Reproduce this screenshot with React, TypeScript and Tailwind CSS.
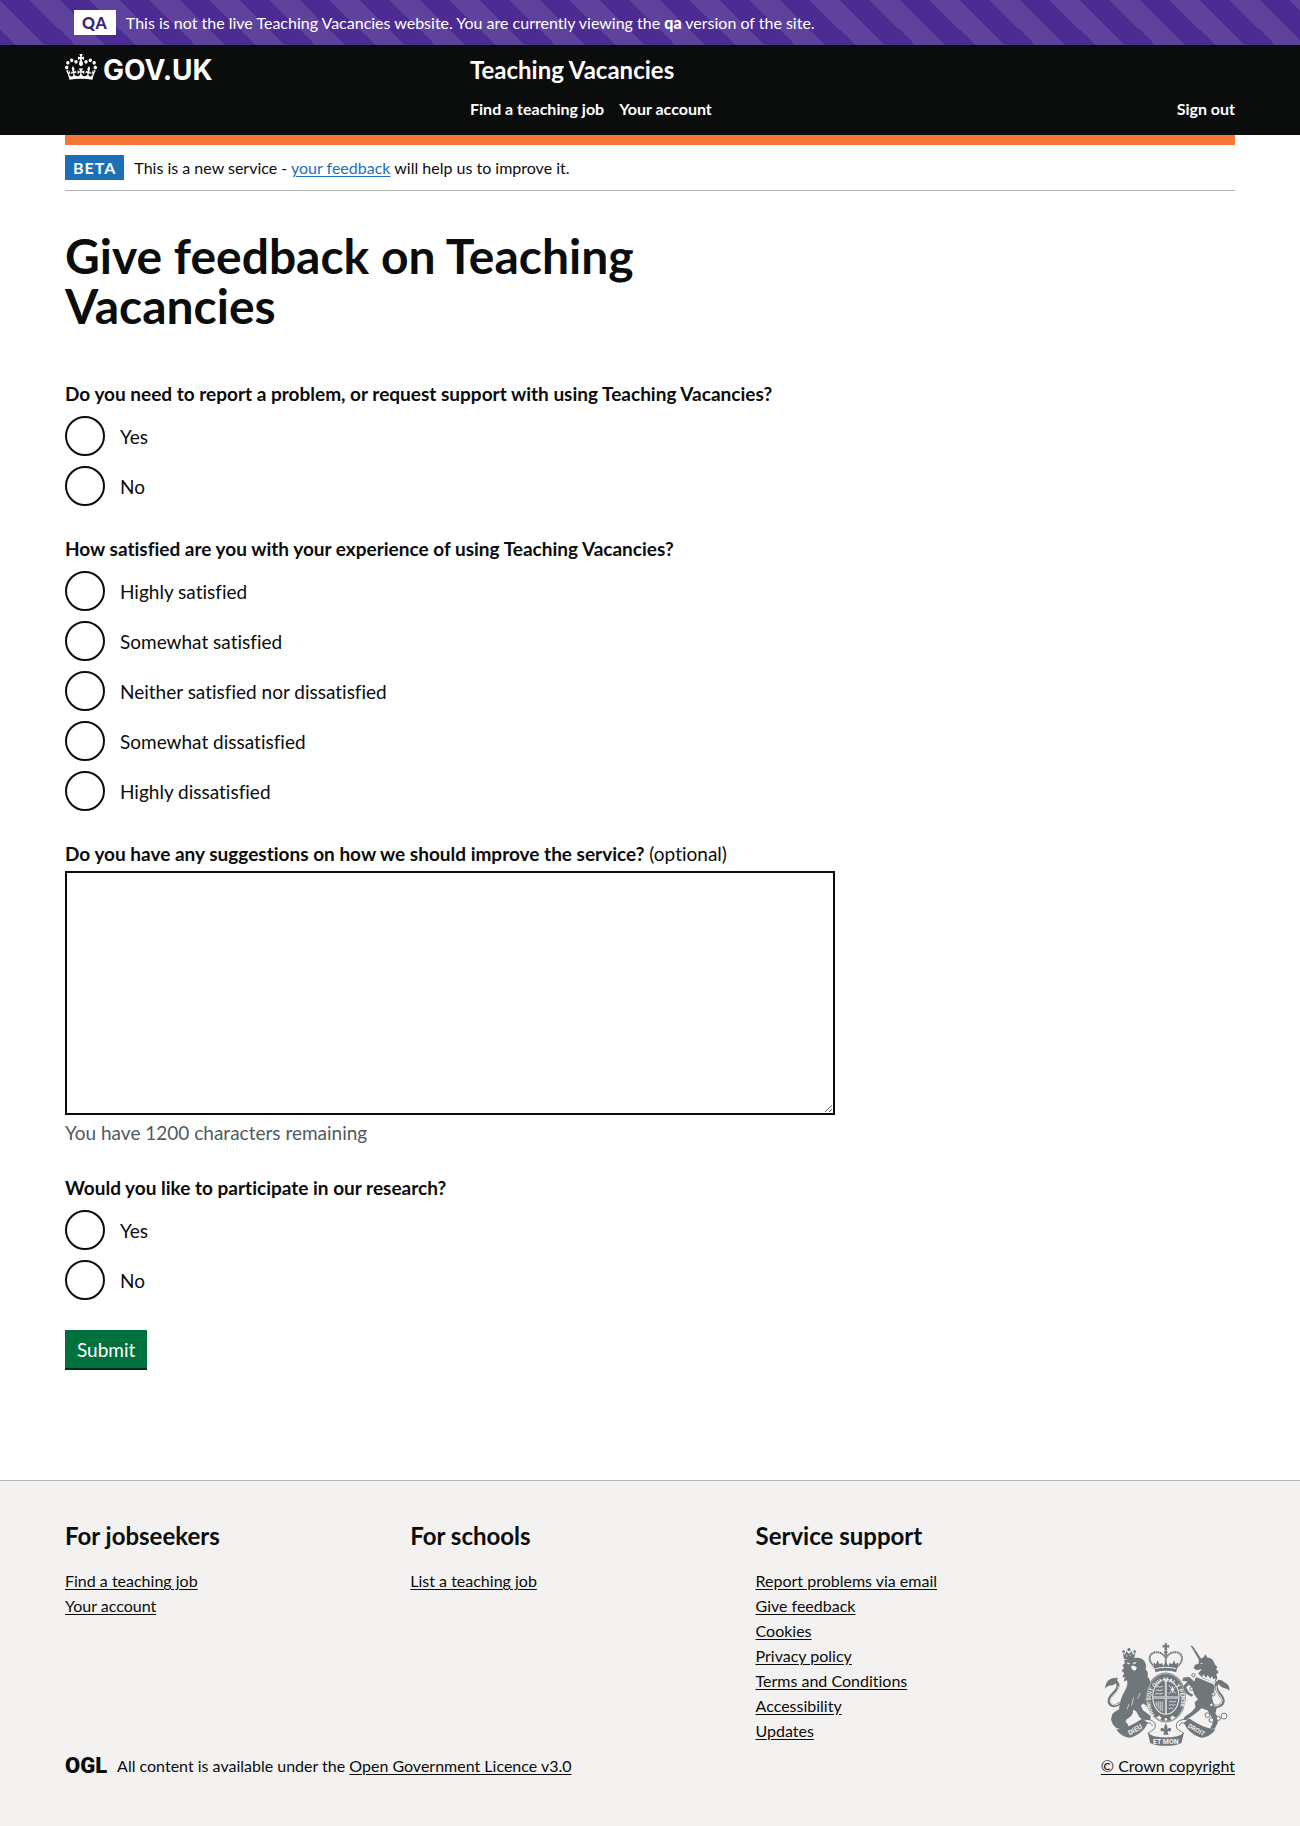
import { useState } from "react";
import type { ReactNode } from "react";

const CROWN =
  "M25 30.2c3.5 1.5 7.7-.2 9.1-3.7 1.5-3.6-.2-7.8-3.9-9.2-3.6-1.4-7.6.3-9.1 3.9-1.4 3.5.3 7.5 3.9 9zM9 39.5c3.6 1.5 7.8-.2 9.2-3.7 1.5-3.6-.2-7.8-3.9-9.1-3.6-1.5-7.6.2-9.1 3.8-1.4 3.5.3 7.5 3.8 9zM4.4 57.2c3.5 1.5 7.7-.2 9.1-3.8 1.5-3.6-.2-7.7-3.9-9.1-3.5-1.5-7.6.3-9.1 3.8-1.4 3.5.3 7.6 3.9 9.1zm38.3-21.4c3.5 1.5 7.7-.2 9.1-3.8 1.5-3.6-.2-7.7-3.9-9.1-3.6-1.5-7.6.3-9.1 3.8-1.3 3.6.4 7.7 3.9 9.1zm64.4-5.6c-3.6 1.5-7.8-.2-9.1-3.7-1.5-3.6.2-7.8 3.8-9.2 3.6-1.4 7.7.3 9.2 3.9 1.3 3.5-.4 7.5-3.9 9zm15.9 9.3c-3.6 1.5-7.7-.2-9.1-3.7-1.5-3.6.2-7.8 3.7-9.1 3.6-1.5 7.7.2 9.2 3.8 1.5 3.5-.3 7.5-3.8 9zm4.7 17.7c-3.6 1.5-7.8-.2-9.2-3.8-1.5-3.6.2-7.7 3.9-9.1 3.6-1.5 7.7.3 9.2 3.8 1.3 3.5-.4 7.6-3.9 9.1zM89.3 35.8c-3.6 1.5-7.8-.2-9.2-3.8-1.4-3.6.2-7.7 3.9-9.1 3.6-1.5 7.7.3 9.2 3.8 1.4 3.6-.3 7.7-3.9 9.1zM69.7 17.7l8.9 4.7V9.3l-8.9 2.8c-.2-.3-.5-.6-.9-.9L72.4 0H59.6l3.5 11.2c-.3.3-.6.5-.9.9l-8.8-2.8v13.1l8.8-4.7c.3.3.6.7.9.9l-5 15.4v.1c-.2.8-.4 1.6-.4 2.4 0 4.1 3.1 7.5 7 8.1h.2c.3 0 .7.1 1 .1.4 0 .7 0 1-.1h.2c4-.6 7.1-4.1 7.1-8.1 0-.8-.1-1.7-.4-2.4V34l-5.1-15.4c.4-.2.7-.6 1-.9zM66 92.8c16.9 0 32.8 1.1 47.1 3.2 4-16.9 8.9-26.7 14-33.5l-9.6-3.4c1 4.9 1.1 7.2 0 10.2-1.5-1.4-3-4.3-4.2-8.7L108.6 76c2.8-2 5-3.2 7.5-3.3-4.4 9.4-10 11.9-13.6 11.2-4.3-.8-6.3-4.6-5.6-7.9 1-4.7 5.7-5.9 8-.5 4.3-8.7-3-11.4-7.6-8.8 7.1-7.2 7.9-13.5 2.1-21.1-8 6.1-8.1 12.3-4.5 20.8-4.7-5.4-12.1-2.5-9.5 6.2 3.4-5.2 7.9-2 7.2 3.1-.6 4.3-6.4 7.8-13.5 7.2-10.3-.9-10.9-8-11.2-13.8 2.5-.5 7.1 1.8 11 7.3L80.2 60c-4.1 4.4-8 5.3-12.3 5.4 1.4-4.4 8-11.6 8-11.6H55.5s6.4 7.2 7.9 11.6c-4.2-.1-8-1-12.3-5.4l1.4 16.4c3.9-5.5 8.5-7.7 10.9-7.3-.3 5.8-.9 12.8-11.1 13.8-7.2.6-12.9-2.9-13.5-7.2-.7-5 3.8-8.3 7.1-3.1 2.7-8.7-4.6-11.6-9.4-6.2 3.7-8.5 3.6-14.7-4.6-20.8-5.8 7.6-5 13.9 2.2 21.1-4.7-2.6-11.9.1-7.7 8.8 2.3-5.5 7.1-4.2 8.1.5.7 3.3-1.3 7.1-5.7 7.9-3.5.7-9-1.8-13.5-11.2 2.5.1 4.7 1.3 7.5 3.3l-4.7-15.4c-1.2 4.4-2.7 7.2-4.3 8.7-1.1-3-.9-5.3 0-10.2l-9.5 3.4c5 6.9 9.9 16.7 14 33.5 14.8-2.1 30.8-3.2 47.7-3.2z";

const INK = "#6f777b";
const PAPER = "#f3f2f1";

function RoyalArms() {
  return (
    <svg viewBox="36 27 376 308" className="h-[103px] w-[125px]" aria-hidden="true" fill={INK}>
      {/* lion */}
      <path d="M90 54l6 8 4-12 8 9 8-9 4 12 8-7-5 19H93z" />
      <circle cx="108" cy="46" r="5" />
      <circle cx="92" cy="52" r="4" />
      <circle cx="125" cy="52" r="4" />
      <path d="M100 65h4M110 63h4" stroke={PAPER} strokeWidth="3" />
      <path d="M93 78C112 70 136 68 148 74C160 84 161 96 158 106C166 112 166 120 164 126C170 134 172 140 172 146L180 162L186 176L176 184L166 174L162 180L158 196L172 206L178 218L168 222L152 208L144 214L150 228L164 238L174 246L172 258L152 257L140 250L130 232L120 226C122 240 114 248 100 256L98 264L106 272L104 282L88 286L70 282L60 272L54 256L58 240L70 230L78 226C80 210 82 196 90 180C100 164 106 150 102 138L92 142L96 130L88 128L94 116L86 110L93 100L88 92L96 88Z" />
      <path d="M100 84l12 3-6 4zM118 86l12-3-4 7zM114 96c6-3 12-1 18 4l-4 8c-8 2-12-2-14-12z" fill={PAPER} />
      <path d="M122 190l-6 24M142 176l-8 18M108 210l-6 16" stroke={PAPER} strokeWidth="2" />
      <path d="M82 206C64 222 46 214 49 196C53 178 78 172 75 152C74 144 68 140 62 142" fill="none" stroke={INK} strokeWidth="9" />
      <path d="M80 207C64 218 50 211 52 197C56 182 79 174 76 156" fill="none" stroke={PAPER} strokeWidth="3" />
      <path d="M36 164C38 142 48 134 60 132C66 130 72 132 74 128C74 144 66 154 50 154C44 156 40 158 36 164Z" />

      {/* unicorn */}
      <path d="M293 33l7 3 25 37-7 3z" />
      <path d="M318 76L332 70L338 60L344 70C356 70 364 80 366 90L374 98L370 104L378 114L371 120L374 132L366 146L330 132L316 118L328 104L312 108L303 102L306 92L318 88Z" />
      <path d="M322 86l8 0-3 4z" fill={PAPER} />
      <path d="M311 122l54 24 4-14-7 3-4-10-6 8-7-11-5 9-8-11-4 9-9-7z" fill={PAPER} />
      <path d="M310 128L362 150C368 166 364 178 358 190L362 206L372 222L368 238L378 252L374 268L366 284L352 284L362 262L354 244L344 228L326 222L316 232L300 244L282 256L270 258L276 248L296 234L308 220L306 204L316 196L304 180L298 160L288 152L280 160L290 176L302 182L296 188L280 178L270 158L284 142L268 140L272 130L290 128L304 142Z" />
      <path d="M362 216C376 220 392 212 391 198C390 184 366 170 370 154C372 142 384 140 390 146" fill="none" stroke={INK} strokeWidth="10" />
      <path d="M364 215C376 217 389 211 388 198C386 184 366 172 371 156" fill="none" stroke={PAPER} strokeWidth="3" />
      <path d="M376 136C386 144 396 142 404 150C410 156 412 164 410 170C404 162 394 164 386 158C378 152 374 146 376 136Z" />
      <g fill={PAPER} stroke={INK} strokeWidth="3">
        <circle cx="302" cy="123" r="5" />
        <circle cx="296" cy="164" r="5" />
        <circle cx="362" cy="180" r="5" />
        <circle cx="356" cy="212" r="5" />
        <circle cx="344" cy="243" r="7" />
        <circle cx="356" cy="258" r="7" />
        <circle cx="377" cy="253" r="6" />
        <circle cx="394" cy="246" r="9" />
      </g>

      {/* garter and shield */}
      <ellipse cx="219" cy="190" rx="60" ry="75" />
      <ellipse cx="219" cy="190" rx="57" ry="72" fill="none" stroke={PAPER} strokeWidth="1.5" />
      <ellipse cx="219" cy="188" rx="41" ry="54" fill={PAPER} />
      <ellipse cx="219" cy="188" rx="38" ry="51" />
      <path d="M219 136v104M180 190h78" stroke={PAPER} strokeWidth="6" />
      <path d="M219 136v104M180 190h78" stroke={INK} strokeWidth="1.5" />
      <g fill="none" stroke={PAPER} strokeWidth="2.5">
        <path d="M190 160l6-4 5 3 9-3M188 170l7-3 6 3 9-4M187 180l8-3 6 3 9-3" />
        <path d="M228 152l20 26M248 156l-20 24M233 166h12M239 156v20" />
        <path d="M190 202v14M196 202v22M202 202v28M208 202v30" />
        <path d="M228 204l8-3 5 3 9-3M228 214l8-3 5 3 7-3M228 224l7-3 6 3" />
      </g>
      <defs>
        <path id="garter" d="M186 244A46 60 0 1 1 252 244" />
      </defs>
      <text fill={PAPER} fontFamily="Roboto, sans-serif" fontSize="17" fontWeight="700">
        <textPath href="#garter" startOffset="2">HONI SOIT QUI MAL Y PENSE</textPath>
      </text>
      <path d="M190 250l10-6 6 8-4 6zM248 250l-10-6-6 8 4 6z" fill={PAPER} />
      <circle cx="219" cy="256" r="4" fill={PAPER} />

      {/* royal crown */}
      <path d="M215 27h8l-1 6 7-1v8l-7-1 1 10h-8l1-10-7 1v-8l7 1z" />
      <circle cx="219" cy="54" r="5" />
      <g fill="none" stroke={INK} strokeWidth="6" strokeDasharray="5 1.5">
        <path d="M186 98C164 82 166 56 188 54C202 53 212 60 218 70" />
        <path d="M252 98C274 82 272 56 250 54C236 53 226 60 220 70" />
        <path d="M219 58v30" />
      </g>
      <path d="M184 100l-2-16 8 6 4-12 6 12 8-4 3 10 8-14 8 14 3-10 8 4 6-12 4 12 8-6-2 16-4 14c-20-6-42-6-62 0z" />
      <path d="M188 103c20-5 42-5 62 0" fill="none" stroke={PAPER} strokeWidth="3" />

      {/* motto ribbon */}
      <path d="M70 286C94 284 122 272 148 253L165 266C154 290 136 304 112 311C94 310 80 300 70 286Z" />
      <path d="M368 286C344 284 316 272 290 253L273 266C284 290 302 304 326 311C344 310 358 300 368 286Z" />
      <g fill="none" stroke={INK} strokeWidth="3">
        <path d="M150 258C172 252 190 262 187 278C185 292 166 290 167 300" />
        <path d="M288 258C266 252 248 262 251 278C253 292 272 290 271 300" />
        <path d="M162 268C170 264 178 268 178 276" />
        <path d="M276 268C268 264 260 268 260 276" />
      </g>
      <path d="M164 294C174 308 198 310 219 310C240 310 264 308 274 294L266 326C256 334 238 335 219 335C200 335 182 334 172 326Z" />
      <path d="M219 268c6 8 6 14 3 20 4-8 14-8 13 0-1 5-6 5-8 2l-3 4 3 8h-16l3-8-3-4c-2 3-7 3-8-2-1-8 9-8 13 0-3-6-3-12 3-20z" />
      <g fill={PAPER} fontFamily="Roboto, sans-serif" fontWeight="700" fontSize="21" textAnchor="middle">
        <text x="219" y="331">ET MON</text>
        <text transform="translate(130 293) rotate(-29)">DIEU</text>
        <text transform="translate(308 293) rotate(29)" fontSize="19">DROIT</text>
      </g>
    </svg>
  );
}

function Legend({ children }: { children: ReactNode }) {
  return <legend className="mb-[10px] text-[19px] leading-[25px] font-bold">{children}</legend>;
}

function RadioGroup({ name, title, options }: { name: string; title: string; options: string[] }) {
  return (
    <fieldset className="mb-[30px]">
      <Legend>{title}</Legend>
      <div className="flex flex-col gap-[10px]">
        {options.map((option) => (
          <label key={option} className="flex h-10 w-fit cursor-pointer items-center gap-[15px] text-[19px] leading-[25px]">
            <input
              type="radio"
              name={name}
              value={option}
              className="size-10 shrink-0 appearance-none rounded-full border-2 border-[#0b0c0c] bg-white checked:shadow-[inset_0_0_0_8px_#fff] checked:bg-[#0b0c0c]"
            />
            {option}
          </label>
        ))}
      </div>
    </fieldset>
  );
}

const LINK_GROUPS = [
  { title: "For jobseekers", links: ["Find a teaching job", "Your account"] },
  { title: "For schools", links: ["List a teaching job"] },
  {
    title: "Service support",
    links: [
      "Report problems via email",
      "Give feedback",
      "Cookies",
      "Privacy policy",
      "Terms and Conditions",
      "Accessibility",
      "Updates",
    ],
  },
];

const LIMIT = 1200;

export default function App() {
  const [suggestion, setSuggestion] = useState("");

  return (
    <div className="flex min-h-screen flex-col bg-white font-[Lato,sans-serif] text-base leading-5 text-[#0b0c0c] [font-variant-ligatures:none]">
      <div className="bg-[#4c2c92] bg-[linear-gradient(45deg,#4c2c92_25%,#5f429c_25%,#5f429c_50%,#4c2c92_50%,#4c2c92_75%,#5f429c_75%)] bg-[size:60px_60px] py-[10px] text-white">
        <div className="mx-auto flex max-w-[1170px] items-center px-[9px]">
          <strong className="mr-[10px] bg-white px-2 py-[2px] leading-[21px] font-black tracking-[1px] text-[#3d2375]">QA</strong>
          <p>
            This is not the live Teaching Vacancies website. You are currently viewing the{" "}
            <strong className="font-black">qa</strong> version of the site.
          </p>
        </div>
      </div>

      <header className="bg-[#0b0c0c] text-white">
        <div className="mx-auto -mb-[10px] flex max-w-[1170px] items-start border-b-10 border-[#f47738] pb-4">
          <a href="#" className="flex w-[405px] items-start gap-[6px] pt-[9px]">
            <svg viewBox="0 0 132 97" preserveAspectRatio="none" className="h-[26px] w-8" fill="currentColor" aria-hidden="true">
              <path d={CROWN} />
            </svg>
            <span className="font-[Inter,sans-serif] text-[28px] leading-8 font-bold">GOV.UK</span>
          </a>
          <div className="flex-1 pt-[10px]">
            <a href="#" className="block w-fit text-2xl leading-[30px] font-bold">
              Teaching Vacancies
            </a>
            <nav aria-label="Menu" className="mt-[14px] flex gap-[15px] font-bold">
              <a href="#">Find a teaching job</a>
              <a href="#">Your account</a>
              <a href="#" className="ml-auto">
                Sign out
              </a>
            </nav>
          </div>
        </div>
      </header>

      <div className="mx-auto mt-[10px] w-full max-w-[1170px]">
        <div className="flex items-center border-b border-[#b1b4b6] py-[10px]">
          <strong className="mr-[10px] bg-[#1d70b8] px-2 py-[2px] leading-[21px] tracking-[1px] text-white">BETA</strong>
          <p>
            This is a new service -{" "}
            <a href="#" className="text-[#1d70b8] underline underline-offset-2">
              your feedback
            </a>{" "}
            will help us to improve it.
          </p>
        </div>
      </div>

      <main className="mx-auto w-full max-w-[1170px] flex-1 pt-10 pb-[110px]">
        <div className="max-w-[770px]">
          <h1 className="mb-[50px] max-w-[640px] text-5xl leading-[50px] font-bold">
            Give feedback on Teaching Vacancies
          </h1>
          <form onSubmit={(event) => event.preventDefault()}>
            <RadioGroup
              name="problem"
              title="Do you need to report a problem, or request support with using Teaching Vacancies?"
              options={["Yes", "No"]}
            />
            <RadioGroup
              name="satisfaction"
              title="How satisfied are you with your experience of using Teaching Vacancies?"
              options={[
                "Highly satisfied",
                "Somewhat satisfied",
                "Neither satisfied nor dissatisfied",
                "Somewhat dissatisfied",
                "Highly dissatisfied",
              ]}
            />
            <div className="mb-[30px] text-[19px] leading-[25px]">
              <label htmlFor="suggestion" className="mb-[5px] block">
                <strong>Do you have any suggestions on how we should improve the service?</strong> (optional)
              </label>
              <textarea
                id="suggestion"
                aria-describedby="suggestion-hint"
                value={suggestion}
                onChange={(event) => setSuggestion(event.target.value)}
                className="mb-[5px] block h-[244px] w-full resize-y border-2 border-[#0b0c0c] p-[5px]"
              />
              <p id="suggestion-hint" className="text-[#505a5f]">
                You have {LIMIT - suggestion.length} characters remaining
              </p>
            </div>
            <RadioGroup name="research" title="Would you like to participate in our research?" options={["Yes", "No"]} />
            <button
              type="submit"
              className="h-10 cursor-pointer border-b-2 border-[#002d18] bg-[#00703c] px-3 text-[19px] leading-[25px] text-white"
            >
              Submit
            </button>
          </form>
        </div>
      </main>

      <footer className="border-t border-[#b1b4b6] bg-[#f3f2f1] pt-10 pb-[50px]">
        <div className="mx-auto flex max-w-[1170px] items-end gap-[30px]">
          <div className="flex-1">
            <div className="grid grid-cols-3 gap-[30px]">
              {LINK_GROUPS.map((group) => (
                <section key={group.title}>
                  <h2 className="mb-5 text-2xl leading-[30px] font-bold">{group.title}</h2>
                  <ul className="flex flex-col gap-[5px]">
                    {group.links.map((link) => (
                      <li key={link}>
                        <a href="#" className="underline underline-offset-2">
                          {link}
                        </a>
                      </li>
                    ))}
                  </ul>
                </section>
              ))}
            </div>
            <div className="mt-[15px] flex items-center gap-[10px]">
              <span className="font-[Roboto,sans-serif] text-[22px] leading-5 font-black">OGL</span>
              <p>
                All content is available under the{" "}
                <a href="#" className="underline underline-offset-2">
                  Open Government Licence v3.0
                </a>
              </p>
            </div>
          </div>
          <a
            href="#"
            className="flex shrink-0 flex-col items-center gap-[10px] whitespace-nowrap underline underline-offset-2"
          >
            <RoyalArms />
            © Crown copyright
          </a>
        </div>
      </footer>
    </div>
  );
}
